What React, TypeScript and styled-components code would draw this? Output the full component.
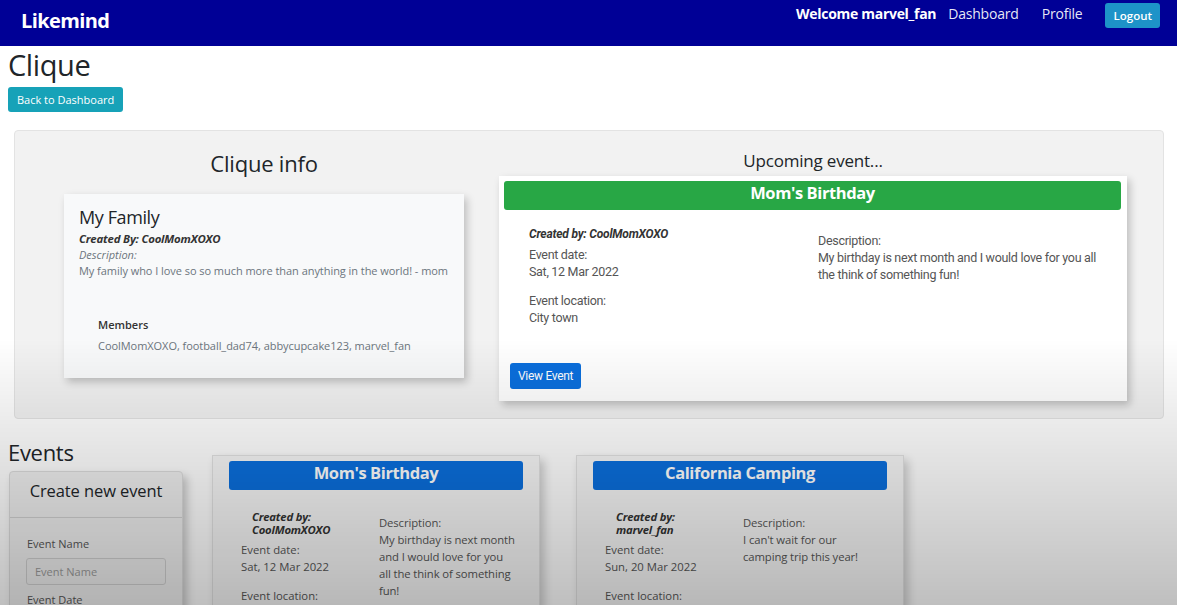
import React from "react";
import styled, { createGlobalStyle } from "styled-components";

const GlobalStyle = createGlobalStyle`
  * { box-sizing: border-box; }
  body {
    margin: 0;
    background: #ffffff;
    color: #212529;
    font-family: "Open Sans", "Noto Sans", sans-serif;
  }
`;

const Nav = styled.nav`
  height: 46px;
  background: #000096;
  display: flex;
  justify-content: space-between;
  align-items: flex-start;
  padding: 0 17px 0 21px;
`;

const Brand = styled.div`
  color: #ffffff;
  font-size: 20px;
  font-weight: 700;
  line-height: 26px;
  margin-top: 8px;
  letter-spacing: -0.6px;
`;

const NavRight = styled.div`
  display: flex;
  align-items: flex-start;
  padding-top: 2px;
`;

const Welcome = styled.span`
  color: #ffffff;
  font-weight: 700;
  font-size: 14px;
  line-height: 24px;
  letter-spacing: -0.3px;
  margin-right: 12px;
`;

const NavLink = styled.a<{ $gap: number }>`
  color: rgba(255, 255, 255, 0.92);
  font-size: 14px;
  line-height: 24px;
  text-decoration: none;
  margin-right: ${(p) => p.$gap}px;
  letter-spacing: -0.2px;
`;

const LogoutButton = styled.button`
  margin-top: 1px;
  height: 25px;
  padding: 0 8px;
  border: none;
  border-radius: 3px;
  background: #1d93c8;
  color: #ffffff;
  font-family: inherit;
  font-size: 11.5px;
  font-weight: 600;
`;

const Main = styled.main`
  padding: 0 8px;
`;

const PageTitle = styled.h1`
  margin: 1px 0 0;
  font-size: 29px;
  font-weight: 400;
  line-height: 36px;
  letter-spacing: -0.4px;
`;

const InfoButton = styled.button`
  margin-top: 4px;
  height: 25px;
  padding: 0 9px;
  border: none;
  border-radius: 3px;
  background: #17a2b8;
  color: #ffffff;
  font-family: inherit;
  font-size: 11px;
  letter-spacing: 0;
`;

const Panel = styled.section`
  margin: 18px 5px 0 6px;
  height: 289px;
  background: #f2f2f2;
  border: 1px solid #e3e3e3;
  border-radius: 4px;
  display: flex;
  gap: 35px;
  padding: 0 36px 0 49px;
`;

const Column = styled.div<{ $width?: number }>`
  display: flex;
  flex-direction: column;
  ${(p) => (p.$width ? `width: ${p.$width}px;` : "flex: 1;")}
`;

const ColHeading = styled.h2<{ $size: number; $after: number }>`
  margin: 17px 0 ${(p) => p.$after}px;
  text-align: center;
  font-size: ${(p) => p.$size}px;
  font-weight: 400;
  line-height: ${(p) => p.$size + 8}px;
  letter-spacing: -0.2px;
`;

const CliqueCard = styled.div`
  height: 184px;
  background: #f8f9fa;
  box-shadow: 3px 4px 8px rgba(0, 0, 0, 0.22);
  padding: 11px 15px;
  display: flex;
  flex-direction: column;
`;

const CardTitle = styled.div`
  font-size: 18px;
  line-height: 24px;
  letter-spacing: -0.4px;
  margin-bottom: 2px;
`;

const CreatedBy = styled.div<{ $size?: number }>`
  font-weight: 700;
  font-style: italic;
  font-size: ${(p) => p.$size ?? 11.4}px;
  line-height: 16px;
  color: #333;
  letter-spacing: -0.2px;
`;

const SmallItalic = styled.div`
  font-style: italic;
  font-size: 11px;
  line-height: 15px;
  color: #6c757d;
`;

const SmallText = styled.div`
  font-size: 11px;
  line-height: 18px;
  color: #6c757d;
  letter-spacing: -0.05px;
`;

const Members = styled.div`
  margin: 37px 0 0 19px;
  display: flex;
  flex-direction: column;
  gap: 4px;
`;

const MembersTitle = styled.div`
  font-size: 11px;
  font-weight: 600;
  line-height: 16px;
  color: #333;
`;

const UpcomingCard = styled.div`
  height: 225px;
  background: #ffffff;
  box-shadow: 3px 4px 8px rgba(0, 0, 0, 0.22);
  padding: 5px 6px 12px 5px;
  display: flex;
  flex-direction: column;
  font-family: Roboto, "Open Sans", sans-serif;
`;

const EventHeader = styled.div<{ $color: string }>`
  height: 29px;
  border-radius: 3px;
  background: ${(p) => p.$color};
  color: #ffffff;
  font-family: "Open Sans", sans-serif;
  font-weight: 700;
  font-size: 16.5px;
  line-height: 23px;
  text-align: center;
  letter-spacing: -0.4px;
`;

const UpcomingBody = styled.div`
  flex: 1;
  display: grid;
  grid-template-columns: 289px 285px;
  padding: 16px 0 0 25px;
  color: #555;
  font-size: 12.5px;
  letter-spacing: -0.3px;
`;

const UpField = styled.div<{ $top?: number }>`
  margin-top: ${(p) => p.$top ?? 0}px;
  line-height: 17px;
`;

const PrimaryButton = styled.button`
  align-self: flex-start;
  height: 26px;
  margin-left: 6px;
  padding: 0 8px;
  border: none;
  border-radius: 3px;
  background: #0b6fdd;
  color: #ffffff;
  font-family: Roboto, sans-serif;
  font-size: 12px;
  letter-spacing: -0.3px;
`;

const SectionTitle = styled.h2`
  margin: 0;
  font-size: 22px;
  font-weight: 400;
  line-height: 24px;
  letter-spacing: -0.3px;
`;

const EventsSection = styled.section`
  margin-top: 21px;
  display: flex;
  align-items: flex-start;
`;

const CreateColumn = styled.div`
  width: 175px;
  display: flex;
  flex-direction: column;
  gap: 7px;
`;

const CreateCard = styled.div`
  margin-left: 1px;
  width: 174px;
  height: 180px;
  background: #efefef;
  border: 1px solid #dcdcdc;
  border-radius: 4px;
  box-shadow: 4px 5px 9px rgba(0, 0, 0, 0.22);
`;

const CreateHeader = styled.div`
  height: 46px;
  border-bottom: 1px solid #d2d2d2;
  font-size: 16.5px;
  line-height: 38px;
  text-align: center;
  letter-spacing: -0.1px;
`;

const CreateBody = styled.div`
  padding: 18px 17px;
  display: flex;
  flex-direction: column;
`;

const FieldLabel = styled.label`
  font-size: 11px;
  line-height: 16px;
  color: #555;
`;

const TextInput = styled.input`
  margin: 6px 0 7px -1px;
  width: 140px;
  height: 27px;
  border: 1px solid #cfcfcf;
  border-radius: 3px;
  background: #ededed;
  padding: 0 8px;
  font-family: inherit;
  font-size: 11px;
  &::placeholder { color: #9a9a9a; }
`;

const EventCard = styled.div<{ $first?: boolean }>`
  margin: 15px 0 0 ${(p) => (p.$first ? 29 : 36)}px;
  width: 328px;
  height: 170px;
  background: #f6f6f6;
  border: 1px solid #e2e2e2;
  padding: 5px 16px 0 16px;
  box-shadow: 4px 5px 9px rgba(0, 0, 0, 0.2);
`;

const EventBody = styled.div`
  display: grid;
  grid-template-columns: 138px 138px;
  padding: 20px 0 0 12px;
  font-size: 11.3px;
  color: #555;
`;

const EventLeft = styled.div`
  display: flex;
  flex-direction: column;
`;

const CreatedBlock = styled.div`
  padding-left: 11px;
  font-weight: 700;
  font-style: italic;
  line-height: 13px;
  color: #333;
  margin-bottom: 5px;
  letter-spacing: -0.2px;
`;

const EventLine = styled.div<{ $top?: number }>`
  margin-top: ${(p) => p.$top ?? 0}px;
  line-height: 17px;
`;

const EventRight = styled.div`
  padding-top: 4px;
  line-height: 17px;
  letter-spacing: -0.1px;
`;

const Vignette = styled.div`
  position: fixed;
  inset: 0;
  pointer-events: none;
  background: linear-gradient(
    to bottom,
    rgba(0, 0, 0, 0) 0%,
    rgba(0, 0, 0, 0) 56%,
    rgba(0, 0, 0, 0.25) 100%
  );
`;

type Ev = {
  title: string;
  author: string;
  date: string;
  description: string;
};

const events: Ev[] = [
  {
    title: "Mom's Birthday",
    author: "CoolMomXOXO",
    date: "Sat, 12 Mar 2022",
    description:
      "My birthday is next month and I would love for you all the think of something fun!",
  },
  {
    title: "California Camping",
    author: "marvel_fan",
    date: "Sun, 20 Mar 2022",
    description: "I can't wait for our camping trip this year!",
  },
];

export default function App() {
  return (
    <>
      <GlobalStyle />
      <Nav>
        <Brand>Likemind</Brand>
        <NavRight>
          <Welcome>Welcome marvel_fan</Welcome>
          <NavLink $gap={23}>Dashboard</NavLink>
          <NavLink $gap={23}>Profile</NavLink>
          <LogoutButton>Logout</LogoutButton>
        </NavRight>
      </Nav>
      <Main>
        <PageTitle>Clique</PageTitle>
        <InfoButton>Back to Dashboard</InfoButton>

        <Panel>
          <Column $width={400}>
            <ColHeading $size={22} $after={16}>
              Clique info
            </ColHeading>
            <CliqueCard>
              <CardTitle>My Family</CardTitle>
              <CreatedBy>Created By: CoolMomXOXO</CreatedBy>
              <SmallItalic>Description:</SmallItalic>
              <SmallText>
                My family who I love so so much more than anything in the world! - mom
              </SmallText>
              <Members>
                <MembersTitle>Members</MembersTitle>
                <SmallText>
                  CoolMomXOXO, football_dad74, abbycupcake123, marvel_fan
                </SmallText>
              </Members>
            </CliqueCard>
          </Column>
          <Column>
            <ColHeading $size={17} $after={3}>
              Upcoming event...
            </ColHeading>
            <UpcomingCard>
              <EventHeader $color="#28a745">Mom's Birthday</EventHeader>
              <UpcomingBody>
                <div>
                  <CreatedBy $size={12}>Created by: CoolMomXOXO</CreatedBy>
                  <UpField $top={4}>Event date:</UpField>
                  <UpField>Sat, 12 Mar 2022</UpField>
                  <UpField $top={12}>Event location:</UpField>
                  <UpField>City town</UpField>
                </div>
                <div>
                  <UpField $top={6}>Description:</UpField>
                  <UpField>
                    My birthday is next month and I would love for you all the think of
                    something fun!
                  </UpField>
                </div>
              </UpcomingBody>
              <PrimaryButton>View Event</PrimaryButton>
            </UpcomingCard>
          </Column>
        </Panel>

        <EventsSection>
          <CreateColumn>
            <SectionTitle>Events</SectionTitle>
            <CreateCard>
              <CreateHeader>Create new event</CreateHeader>
              <CreateBody>
                <FieldLabel>Event Name</FieldLabel>
                <TextInput placeholder="Event Name" />
                <FieldLabel>Event Date</FieldLabel>
              </CreateBody>
            </CreateCard>
          </CreateColumn>
          {events.map((ev, i) => (
            <EventCard key={ev.title} $first={i === 0}>
              <EventHeader $color="#0b6fdd">{ev.title}</EventHeader>
              <EventBody>
                <EventLeft>
                  <CreatedBlock>
                    Created by:
                    <br />
                    {ev.author}
                  </CreatedBlock>
                  <EventLine>Event date:</EventLine>
                  <EventLine>{ev.date}</EventLine>
                  <EventLine $top={12}>Event location:</EventLine>
                </EventLeft>
                <EventRight>
                  Description:
                  <br />
                  {ev.description}
                </EventRight>
              </EventBody>
            </EventCard>
          ))}
        </EventsSection>
      </Main>
      <Vignette />
    </>
  );
}
